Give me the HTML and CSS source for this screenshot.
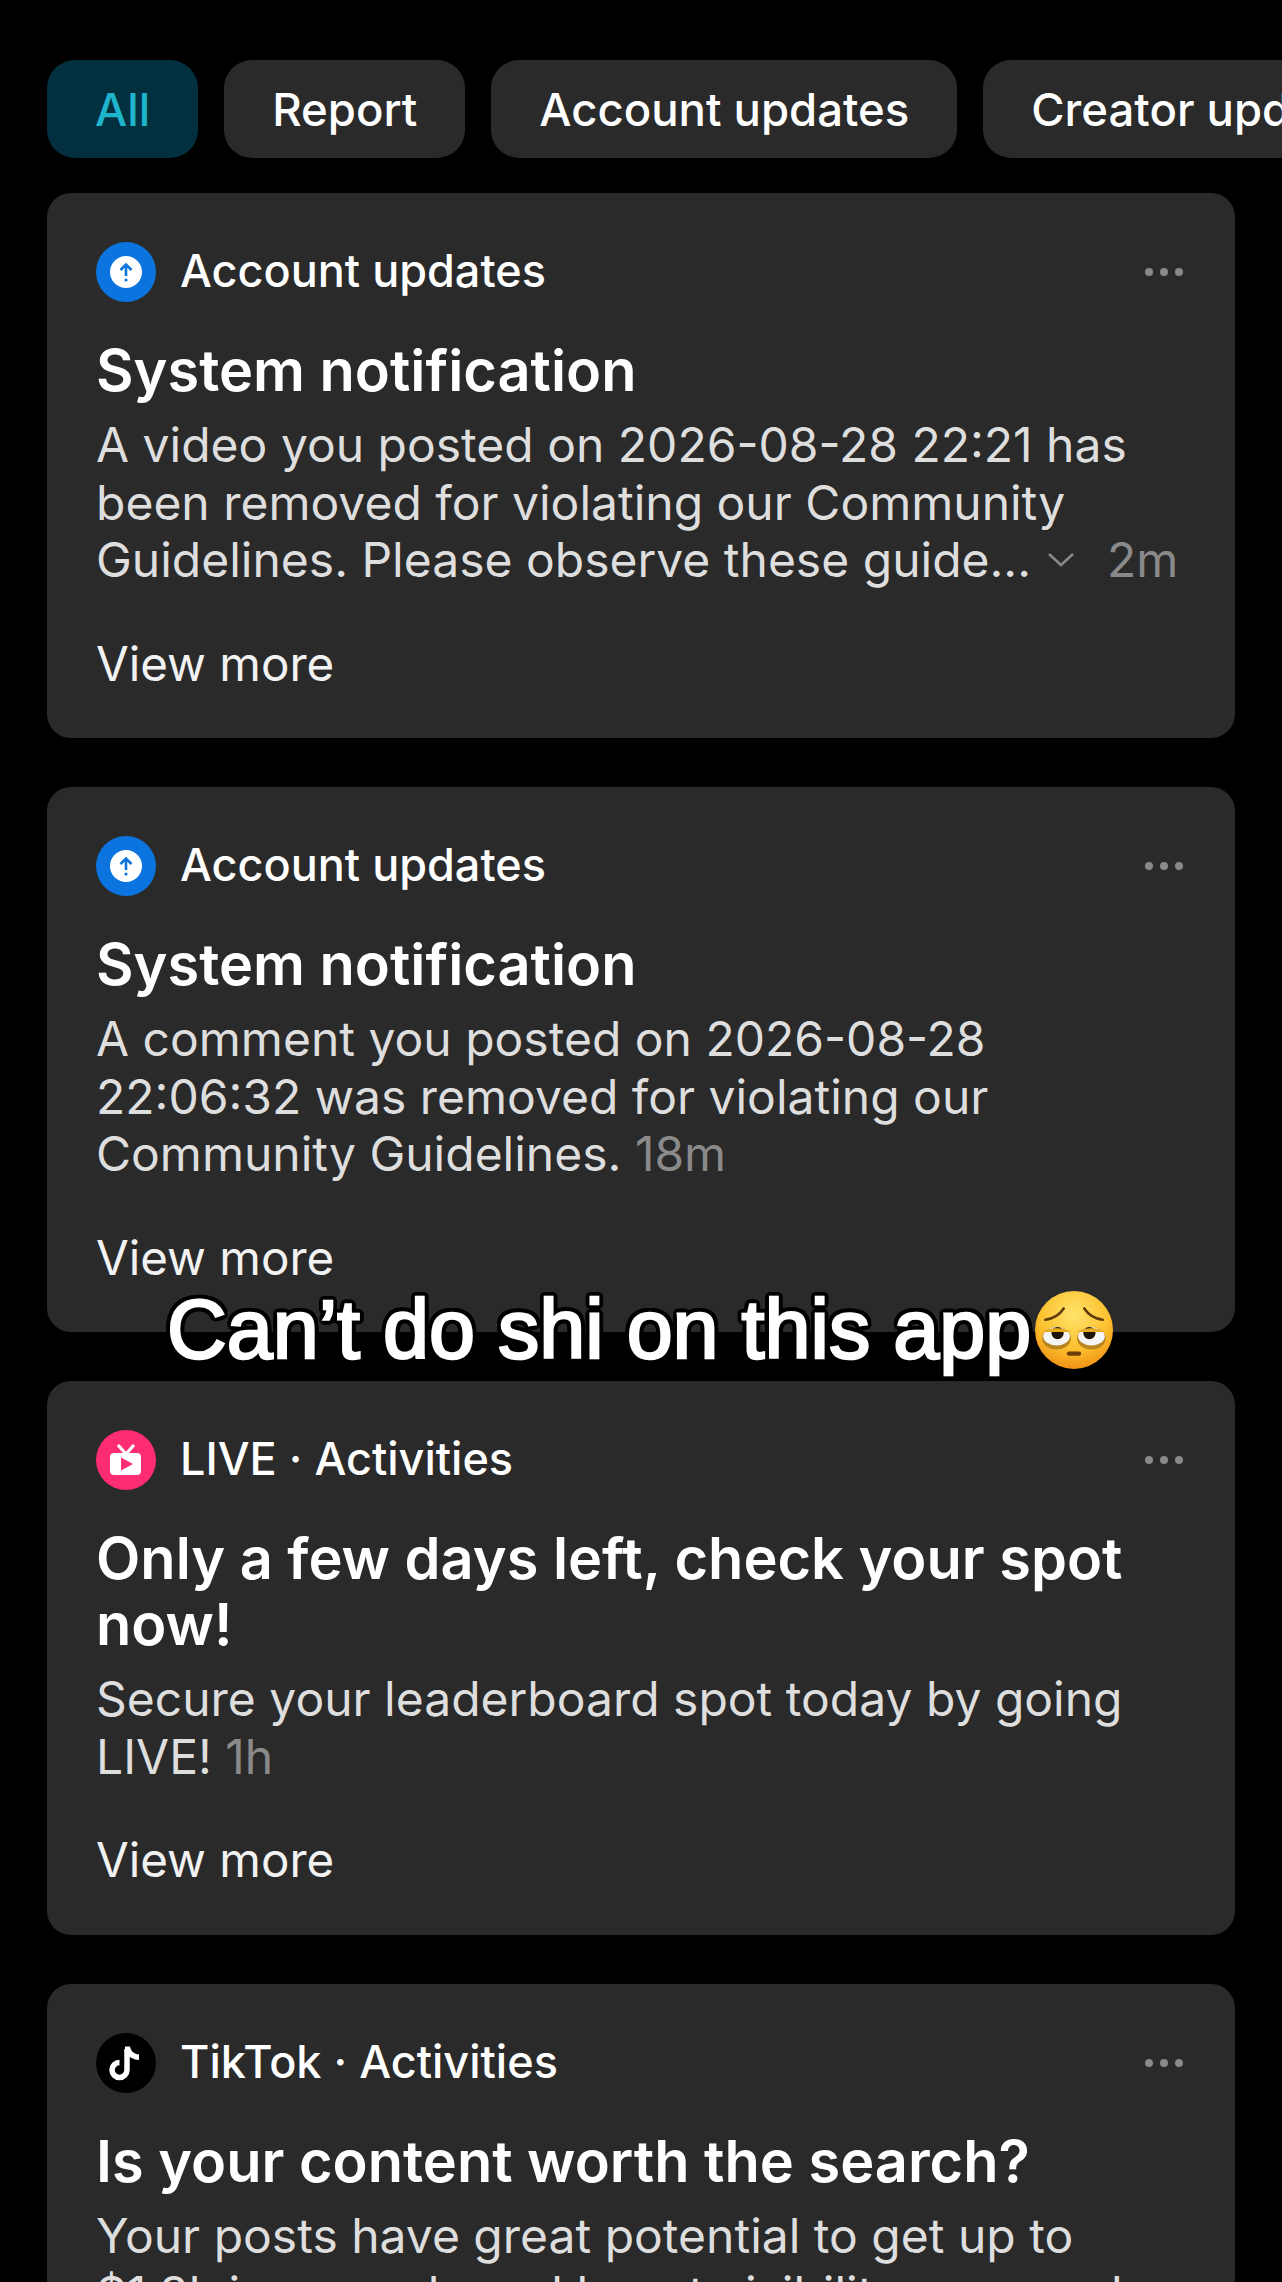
FILE: index.html
```html
<!DOCTYPE html>
<html lang="en">
<head>
    <meta charset="UTF-8">
    <title>Inbox</title>
    <link rel="stylesheet" href="styles.css">
</head>
<body>
    <div class="page">
        <nav class="tabs">
            <a class="tab active">All</a>
            <a class="tab">Report</a>
            <a class="tab">Account updates</a>
            <a class="tab">Creator updates</a>
        </nav>

        <div class="card">
            <div class="card-head">
                <svg class="avatar" viewBox="0 0 60 60">
                    <circle cx="30" cy="30" r="30" fill="#0b74de"/>
                    <circle cx="30" cy="30" r="16" fill="#fff"/>
                    <path d="M30 34V23M24.5 28l5.500-5.500 5.500 5.500" fill="none" stroke="#0b74de" stroke-width="2.600"/>
                    <circle cx="30" cy="38" r="1.600" fill="#0b74de"/>
                </svg>
                <span class="source">Account updates</span>
                <span class="dots"><i></i><i></i><i></i></span>
            </div>
            <h2>System notification</h2>
            <p class="text">A video you posted on 2026-08-28 22:21 has<br>been removed for violating our Community<br>Guidelines. Please observe these guide...<svg class="chevron" viewBox="0 0 26 16"><path d="M1 2l12 11L25 2" fill="none" stroke="#8a8a8a" stroke-width="2.500"/></svg><span class="time time-right">2m</span></p>
            <a class="more">View more</a>
        </div>

        <div class="card">
            <div class="card-head">
                <svg class="avatar" viewBox="0 0 60 60">
                    <circle cx="30" cy="30" r="30" fill="#0b74de"/>
                    <circle cx="30" cy="30" r="16" fill="#fff"/>
                    <path d="M30 34V23M24.5 28l5.500-5.500 5.500 5.500" fill="none" stroke="#0b74de" stroke-width="2.600"/>
                    <circle cx="30" cy="38" r="1.600" fill="#0b74de"/>
                </svg>
                <span class="source">Account updates</span>
                <span class="dots"><i></i><i></i><i></i></span>
            </div>
            <h2>System notification</h2>
            <p class="text">A comment you posted on 2026-08-28<br>22:06:32 was removed for violating our<br>Community Guidelines. <span class="time">18m</span></p>
            <a class="more">View more</a>
        </div>

        <div class="card card-tall">
            <div class="card-head">
                <svg class="avatar" viewBox="0 0 60 60">
                    <circle cx="30" cy="30" r="30" fill="#fe2c71"/>
                    <path d="M30 24l-8-9M30 24l8-9" fill="none" stroke="#fff" stroke-width="3.200"/>
                    <rect x="14" y="23" width="31" height="22" rx="4" fill="#fff"/>
                    <path d="M25 27.500l12 6.500-12 6.500z" fill="#fe2c71"/>
                </svg>
                <span class="source">LIVE · Activities</span>
                <span class="dots"><i></i><i></i><i></i></span>
            </div>
            <h2>Only a few days left, check your spot<br>now!</h2>
            <p class="text">Secure your leaderboard spot today by going<br>LIVE! <span class="time">1h</span></p>
            <a class="more">View more</a>
        </div>

        <div class="card">
            <div class="card-head">
                <svg class="avatar" viewBox="0 0 60 60">
                    <circle cx="30" cy="30" r="30" fill="#000"/>
                    <path d="M31 16v21a7.500 7.500 0 1 1-7.500-7.500" fill="none" stroke="#fff" stroke-width="5.500"/>
                    <path d="M29 13.500h5c.8 4.500 4 7.500 9 8v5.500c-5 0-10-3-14-7z" fill="#fff"/>
                </svg>
                <span class="source">TikTok · Activities</span>
                <span class="dots"><i></i><i></i><i></i></span>
            </div>
            <h2>Is your content worth the search?</h2>
            <p class="text">Your posts have great potential to get up to<br>$1.8k in rewards and boost visibility on search</p>
        </div>

        <div class="caption">
            <span>Can’t do shi on this app</span>
            <svg class="emoji" viewBox="0 0 76 76">
                <defs>
                    <radialGradient id="face" cx="50%" cy="30%" r="75%">
                        <stop offset="0" stop-color="#ffe36b"/>
                        <stop offset="0.6" stop-color="#fcc02e"/>
                        <stop offset="1" stop-color="#ee8a12"/>
                    </radialGradient>
                </defs>
                <circle cx="38" cy="38" r="38" fill="url(#face)"/>
                <path d="M10 28c8-1 14-5 18-11M66 28c-8-1-14-5-18-11" fill="none" stroke="#5f3a0a" stroke-width="2.500" stroke-linecap="round"/>
                <ellipse cx="21" cy="46" rx="14" ry="11" fill="#b9851f"/>
                <ellipse cx="55" cy="46" rx="14" ry="11" fill="#b9851f"/>
                <ellipse cx="21" cy="44" rx="13" ry="9" fill="#f4f4f4"/>
                <ellipse cx="55" cy="44" rx="13" ry="9" fill="#f4f4f4"/>
                <circle cx="22" cy="41" r="6" fill="#1d1408"/>
                <circle cx="53" cy="41" r="6" fill="#1d1408"/>
                <path d="M7 40c6-5 22-5 28 0zM41 40c6-5 22-5 28 0z" fill="#e9a91f"/>
                <rect x="31" y="59" width="14" height="4" rx="2" fill="#6a3f0c"/>
            </svg>
        </div>
    </div>
</body>
</html>
```

FILE: styles.css
```css
* {
    box-sizing: border-box;
}

body {
    margin: 0;
    background-color: #000;
    font-family: 'Inter', 'Liberation Sans', sans-serif;
}

.page {
    position: relative;
    height: 2282px;
    padding: 60px 47px 0;
    overflow: hidden;
}

.tabs {
    display: flex;
    gap: 26px;
    width: 1400px;
    margin-bottom: 35px;
}

.tab {
    display: flex;
    align-items: center;
    height: 98px;
    padding: 0 48px;
    border-radius: 28px;
    background-color: #2a2a2a;
    color: #fff;
    font-size: 45.500px;
    font-weight: 500;
    white-space: nowrap;
}

.tab.active {
    background-color: #03303f;
    color: #1fb3cc;
}

.card {
    width: 1188px;
    height: 545px;
    margin-bottom: 49px;
    padding: 49px 49px 0;
    border-radius: 24px;
    background-color: #2a2a2a;
}

.card-tall {
    height: 554px;
}

.card-head {
    display: flex;
    align-items: center;
    height: 60px;
}

.avatar {
    width: 60px;
    height: 60px;
    margin-right: 24px;
    flex-shrink: 0;
}

.source {
    flex-grow: 1;
    padding-bottom: 3px;
    color: #fff;
    font-size: 45px;
    font-weight: 500;
}

.dots {
    display: flex;
    gap: 7px;
    margin-right: 3px;
}

.dots i {
    width: 8px;
    height: 8px;
    border-radius: 50%;
    background-color: #8a8a8a;
}

h2 {
    margin: 35px 0 13px;
    color: #fff;
    font-size: 57.700px;
    font-weight: 600;
    line-height: 66px;
}

.text {
    margin: 0;
    color: #dedede;
    font-size: 48px;
    font-weight: 400;
    line-height: 57.500px;
    white-space: nowrap;
}

.time {
    color: #8a8a8a;
}

.time-right {
    margin-left: 33px;
}

.chevron {
    width: 26px;
    height: 16px;
    margin-left: 17px;
    vertical-align: 9px;
}

.more {
    display: block;
    margin-top: 46px;
    color: #f2f2f2;
    font-size: 47.500px;
    line-height: 57px;
}

/* caption over the cards */
.caption {
    position: absolute;
    top: 1290px;
    left: 167px;
    display: flex;
    align-items: center;
    gap: 4px;
    color: #fff;
    font-family: 'Liberation Sans', sans-serif;
    font-size: 82.700px;
    line-height: 80px;
    white-space: nowrap;
    -webkit-text-stroke: 2.500px #fff;
    text-shadow: 5px 0 #000, -5px 0 #000, 0 5px #000, 0 -5px #000,
        4px 4px #000, -4px 4px #000, 4px -4px #000, -4px -4px #000,
        5px 2px #000, -5px 2px #000, 5px -2px #000, -5px -2px #000,
        2px 5px #000, -2px 5px #000, 2px -5px #000, -2px -5px #000;
}

.emoji {
    width: 78px;
    height: 78px;
}
```
